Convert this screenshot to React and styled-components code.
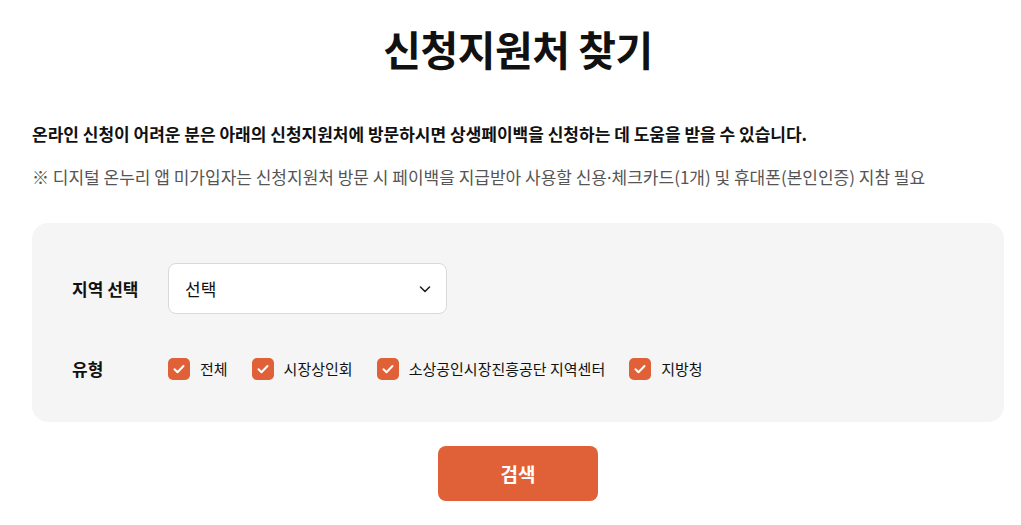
import React from "react";
import styled, { createGlobalStyle } from "styled-components";

const colors = {
  dark: "#111",
  gray: "#555",
  accent: "#e06137",
  panel: "#f5f5f5",
  border: "#d9d9d9"
};

const GlobalStyle = createGlobalStyle`
  body {
    margin: 0;
    background: #fff;
    font-family: "Noto Sans CJK KR", "Noto Sans", sans-serif;
    color: ${colors.dark};
  }
`;

const Wrapper = styled.div`
  width: 1021px;
  padding: 0 17px 0 32px;
  box-sizing: border-box;
`;

const Title = styled.h1`
  margin: 0;
  padding-top: 22px;
  height: 52px;
  line-height: 52px;
  text-align: center;
  font-size: 41px;
  font-weight: 700;
  letter-spacing: -0.5px;
  color: ${colors.dark};
`;

const Lead = styled.p`
  margin: 48px 0 0;
  line-height: 24px;
  font-size: 17px;
  font-weight: 700;
  color: ${colors.dark};
`;

const Note = styled.p`
  margin: 19px 0 0;
  line-height: 24px;
  font-size: 17px;
  color: ${colors.gray};
`;

const Dot = styled.span`
  font-family: "Noto Sans", sans-serif;
`;

const Panel = styled.div`
  margin-top: 33px;
  padding: 40px 40px 41px;
  border-radius: 16px;
  background: ${colors.panel};
  display: grid;
  grid-template-columns: 96px 1fr;
  row-gap: 42px;
  align-items: center;
`;

const Label = styled.div`
  font-size: 17px;
  font-weight: 700;
  color: ${colors.dark};
`;

const Select = styled.div`
  width: 279px;
  height: 51px;
  box-sizing: border-box;
  padding: 0 14px 0 16px;
  display: flex;
  align-items: center;
  justify-content: space-between;
  background: #fff;
  border: 1px solid ${colors.border};
  border-radius: 8px;
  font-size: 17px;
  color: ${colors.dark};
`;

const Checks = styled.div`
  display: flex;
  align-items: center;
  gap: 24px;
`;

const Check = styled.label`
  display: flex;
  align-items: center;
  gap: 10px;
  font-size: 15px;
  color: ${colors.dark};
`;

const Box = styled.span`
  width: 22px;
  height: 22px;
  border-radius: 5px;
  background: ${colors.accent};
  display: flex;
  align-items: center;
  justify-content: center;
`;

const Actions = styled.div`
  display: flex;
  justify-content: center;
  margin-top: 24px;
`;

const Button = styled.button`
  width: 160px;
  height: 55px;
  border: 0;
  border-radius: 8px;
  background: ${colors.accent};
  color: #fff;
  font-family: inherit;
  font-size: 19px;
  font-weight: 700;
`;

const Chevron = () => (
  <svg width="14" height="14" viewBox="0 0 14 14" fill="none">
    <path d="M2.5 5l4.5 4.5L11.5 5" stroke="#222" strokeWidth="1.6" strokeLinecap="round" strokeLinejoin="round" />
  </svg>
);

const Tick = () => (
  <svg width="14" height="14" viewBox="0 0 14 14" fill="none">
    <path d="M2.5 7.2l3 3L11.5 4" stroke="#fff" strokeWidth="2" strokeLinecap="round" strokeLinejoin="round" />
  </svg>
);

const types = ["전체", "시장상인회", "소상공인시장진흥공단 지역센터", "지방청"];

const App = () => (
  <Wrapper>
    <GlobalStyle />
    <Title>신청지원처 찾기</Title>
    <Lead>
      온라인 신청이 어려운 분은 아래의 신청지원처에 방문하시면 상생페이백을 신청하는 데 도움을 받을 수 있습니다.
    </Lead>
    <Note>
      ※ 디지털 온누리 앱 미가입자는 신청지원처 방문 시 페이백을 지급받아 사용할 신용<Dot>·</Dot>체크카드(1개) 및 휴대폰(본인인증) 지참 필요
    </Note>

    <Panel>
      <Label>지역 선택</Label>
      <Select>
        <span>선택</span>
        <Chevron />
      </Select>

      <Label>유형</Label>
      <Checks>
        {types.map(t => (
          <Check key={t}>
            <Box>
              <Tick />
            </Box>
            {t}
          </Check>
        ))}
      </Checks>
    </Panel>

    <Actions>
      <Button>검색</Button>
    </Actions>
  </Wrapper>
);

export default App;
